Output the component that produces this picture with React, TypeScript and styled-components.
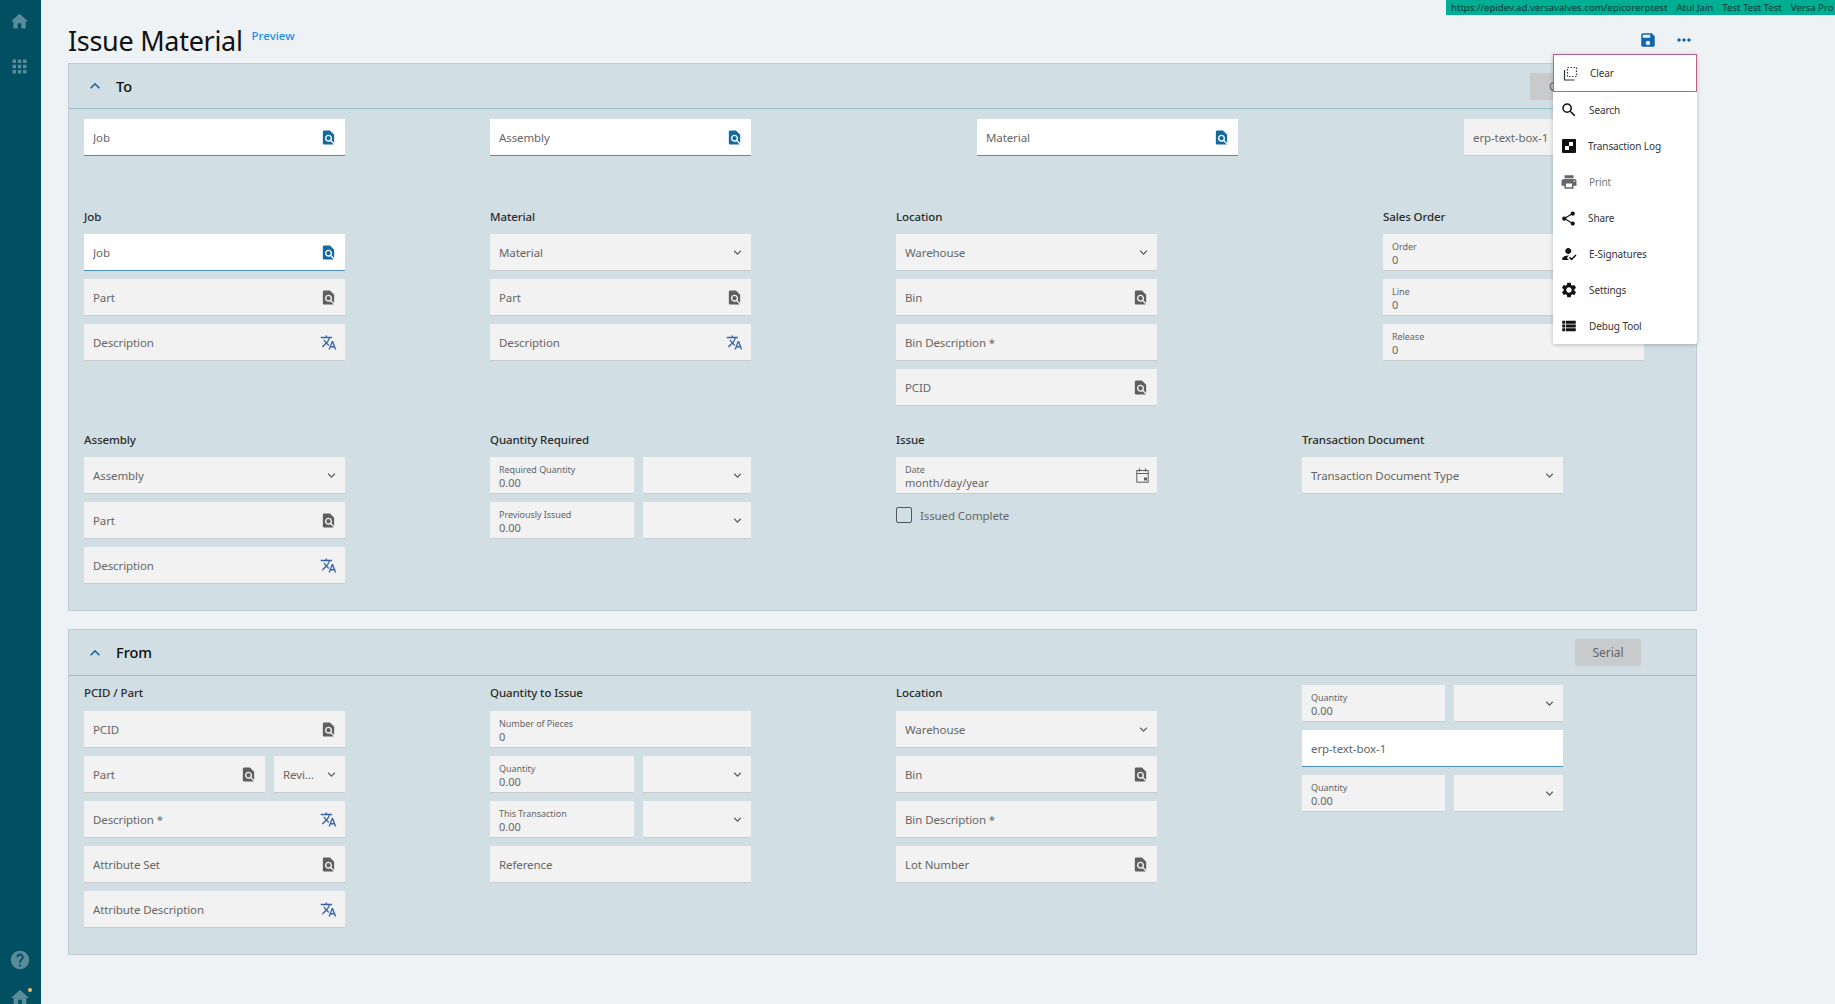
import React from 'react'
import styled, { createGlobalStyle } from 'styled-components'
import {
  MdApps,
  MdExpandLess,
  MdExpandMore,
  MdFindInPage,
  MdHelp,
  MdHome,
  MdHowToReg,
  MdMoreHoriz,
  MdPrint,
  MdSave,
  MdSearch,
  MdSettings,
  MdShare,
  MdTranslate,
  MdViewList,
} from 'react-icons/md'

const GlobalStyle = createGlobalStyle`
  html, body {
    margin: 0;
    height: 100%;
    overflow: hidden;
    background: #eef2f5;
    font-family: "Noto Sans", "Liberation Sans", sans-serif;
  }
`

const Page = styled.div`
  display: flex;
  position: relative;
  width: 1835px;
  height: 1004px;
  overflow: hidden;
`

const Sidebar = styled.nav`
  display: flex;
  flex-direction: column;
  align-items: center;
  flex: 0 0 41px;
  height: 100%;
  padding-top: 11px;
  box-sizing: border-box;
  background: #004f63;
  color: #5a8b99;
`

const SidebarSpacer = styled.div`
  flex: 1;
`

const NavSlot = styled.div<{ $mt?: number }>`
  display: flex;
  margin-top: ${({ $mt }) => $mt ?? 0}px;
  margin-left: -2px;
  line-height: 0;
`

const DropSlot = styled.div`
  position: relative;
  width: 24px;
  height: 17px;
  margin-top: 16px;
  overflow: hidden;
`

const Dot = styled.span`
  position: absolute;
  right: 1px;
  top: 1px;
  width: 4px;
  height: 4px;
  border-radius: 50%;
  background: #f5c65a;
`

const Main = styled.main`
  flex: 1;
  padding: 0 0 0 27px;
`

const TitleRow = styled.header`
  display: flex;
  position: relative;
  align-items: flex-start;
  width: 1629px;
  height: 63px;
`

const Title = styled.h1`
  margin: 21px 0 0;
  color: #111;
  font-size: 27px;
  font-weight: 400;
  line-height: 40px;
  letter-spacing: -0.3px;
`

const PreviewTag = styled.span`
  margin: 28px 0 0 9px;
  color: #1f8fe8;
  font-size: 11.5px;
  font-weight: 500;
  line-height: 16px;
`

const TitleActions = styled.div`
  display: flex;
  align-items: center;
  gap: 17px;
  margin: 30px 3px 0 auto;
  color: #1266a8;
  line-height: 0;
`

const Banner = styled.div`
  position: absolute;
  top: 0;
  left: 1446px;
  display: flex;
  gap: 9px;
  width: 389px;
  height: 15px;
  padding-left: 5px;
  box-sizing: border-box;
  background: #00ae93;
  color: #073a34;
  font-size: 9.6px;
  line-height: 15px;
  white-space: nowrap;
  overflow: hidden;
`

const Panel = styled.section<{ $h: number; $mb?: number }>`
  width: 1629px;
  height: ${({ $h }) => $h}px;
  margin-bottom: ${({ $mb }) => $mb ?? 0}px;
  box-sizing: border-box;
  border: 1px solid #bfcdd3;
  background: #d1dee3;
`

const PanelHeader = styled.div<{ $h: number }>`
  display: flex;
  align-items: center;
  height: ${({ $h }) => $h}px;
  padding: 0 55px 0 16px;
  box-sizing: border-box;
  border-bottom: 1px solid #97c0cc;
`

const Chevron = styled.span`
  display: flex;
  color: #1b6a96;
  line-height: 0;
`

const PanelTitle = styled.h2`
  margin: 0 0 1px 11px;
  color: #0c0c0c;
  font-size: 14.5px;
  font-weight: 500;
`

const HeaderButton = styled.button`
  margin-left: auto;
  width: 111px;
  height: 27px;
  padding: 0 0 0 19px;
  border: 0;
  border-radius: 2px;
  background: #c8cacb;
  color: #666;
  font: inherit;
  font-size: 12px;
  text-align: left;
`

const SerialButton = styled(HeaderButton)`
  width: 66px;
  padding: 0;
  text-align: center;
`

const PanelBody = styled.div<{ $pt: number }>`
  display: flex;
  flex-direction: column;
  padding: ${({ $pt }) => $pt}px 0 0 15px;
`

const Row = styled.div<{ $cols: string; $mt?: number }>`
  display: grid;
  grid-template-columns: ${({ $cols }) => $cols};
  align-items: start;
  margin-top: ${({ $mt }) => $mt ?? 0}px;
`

const Group = styled.div<{ $w?: number }>`
  display: flex;
  flex-direction: column;
  gap: 8px;
  width: ${({ $w }) => $w ?? 261}px;
`

const GroupLabel = styled.div<{ $h?: number }>`
  height: ${({ $h }) => $h ?? 17}px;
  color: #2c2c2c;
  font-size: 11.5px;
  font-weight: 500;
  line-height: 15px;
  letter-spacing: -0.1px;
  white-space: nowrap;
`

const FieldBox = styled.div<{ $active?: boolean }>`
  display: flex;
  align-items: center;
  flex: none;
  width: 100%;
  height: 37px;
  padding: 0 8px 0 9px;
  box-sizing: border-box;
  border-bottom: 1px solid ${({ $active }) => ($active ? '#4a8db5' : '#c8cccf')};
  background: ${({ $active }) => ($active ? '#fff' : '#f2f2f2')};
`

const FieldPlaceholder = styled.span`
  flex: 1;
  min-width: 0;
  padding-top: 1px;
  overflow: hidden;
  color: #666;
  font-size: 11.5px;
  letter-spacing: -0.1px;
  white-space: nowrap;
`

const StackedText = styled.div`
  display: flex;
  flex-direction: column;
  flex: 1;
  min-width: 0;
  padding-top: 2px;
  color: #666;
`

const SmallLabel = styled.span`
  font-size: 9px;
  line-height: 12px;
  letter-spacing: -0.05px;
  white-space: nowrap;
`

const StackedValue = styled.span`
  font-size: 11px;
  line-height: 13px;
  white-space: nowrap;
`

const FieldIcon = styled.span<{ $tone?: string; $nudge?: number }>`
  display: flex;
  flex: none;
  margin-right: ${({ $nudge }) => $nudge ?? 0}px;
  color: ${({ $tone }) => $tone ?? '#5f5f5f'};
  line-height: 0;
`

const Split = styled.div`
  display: flex;
  gap: 9px;
`

const MainSlot = styled.div`
  display: flex;
  flex: 1;
  min-width: 0;
`

const UnitSlot = styled.div<{ $w: number }>`
  display: flex;
  flex: 0 0 ${({ $w }) => $w}px;
`

const CheckRow = styled.label`
  display: flex;
  align-items: center;
  gap: 8px;
  margin-top: 5px;
  color: #666;
  font-size: 11.5px;
  letter-spacing: -0.1px;
`

const CheckBox = styled.span`
  width: 14px;
  height: 14px;
  border: 1px solid #555;
  border-radius: 2px;
`

const Menu = styled.ul`
  position: absolute;
  top: 54px;
  left: 1553px;
  width: 144px;
  height: 290px;
  margin: 0;
  padding: 0;
  border-radius: 2px;
  background: #fff;
  box-shadow: 0 1px 4px rgba(0, 0, 0, 0.22);
  list-style: none;
`

const MenuItem = styled.li<{ $focused?: boolean; $muted?: boolean }>`
  display: flex;
  align-items: center;
  height: ${({ $focused }) => ($focused ? 38 : 36)}px;
  padding-left: ${({ $focused }) => ($focused ? 8 : 7)}px;
  box-sizing: border-box;
  border: ${({ $focused }) => ($focused ? '1px solid #b5628f' : '0')};
  color: ${({ $muted }) => ($muted ? '#777' : '#333')};
  font-size: 10px;
  letter-spacing: -0.1px;
`

const MenuIcon = styled.span<{ $muted?: boolean }>`
  display: flex;
  justify-content: center;
  flex: 0 0 17px;
  margin-right: 11px;
  color: ${({ $muted }) => ($muted ? '#666' : '#111')};
  line-height: 0;
`

const ClearIcon = () => (
  <svg width="15" height="15" viewBox="0 0 15 15" fill="none" stroke="#333" strokeWidth="1.2">
    <path d="M1.5 4v10h10" />
    <path d="M4.5 1.5h9v9h-9z" strokeDasharray="1.5 1.5" />
  </svg>
)

const LogIcon = () => (
  <svg width="14" height="14" viewBox="0 0 14 14">
    <rect width="14" height="14" rx="1" fill="#111" />
    <rect x="7" y="3" width="4" height="4" fill="#fff" />
    <rect x="3" y="7" width="4" height="4" fill="#fff" />
  </svg>
)

const DateIcon = () => (
  <svg width="13" height="15" viewBox="0 0 13 15" fill="none" stroke="#5f5f5f">
    <rect x="0.8" y="2.5" width="11.4" height="11.7" />
    <path d="M0.8 5.5h11.4M3.5 0.5v3M9.5 0.5v3" strokeWidth="1.2" />
    <rect x="8" y="9.5" width="3" height="3" fill="#5f5f5f" stroke="none" />
  </svg>
)

type FieldKind = 'search' | 'translate' | 'select' | 'date' | 'none'

interface FieldProps {
  text?: string
  label?: string
  value?: string
  kind?: FieldKind
  active?: boolean
}

const fieldIcon = (kind: FieldKind, active?: boolean) => {
  if (kind === 'search') {
    return (
      <FieldIcon $tone={active ? '#136a9f' : '#5f5f5f'}>
        <MdFindInPage size={17} />
      </FieldIcon>
    )
  }
  if (kind === 'translate') {
    return (
      <FieldIcon $tone="#3a64a8">
        <MdTranslate size={17} />
      </FieldIcon>
    )
  }
  if (kind === 'select') {
    return (
      <FieldIcon $nudge={-2}>
        <MdExpandMore size={15} />
      </FieldIcon>
    )
  }
  if (kind === 'date') {
    return (
      <FieldIcon>
        <DateIcon />
      </FieldIcon>
    )
  }
  return null
}

const Field = ({ text, label, value, kind = 'none', active }: FieldProps) => (
  <FieldBox $active={active}>
    {label ? (
      <StackedText>
        <SmallLabel>{label}</SmallLabel>
        <StackedValue>{value}</StackedValue>
      </StackedText>
    ) : (
      <FieldPlaceholder>{text}</FieldPlaceholder>
    )}
    {fieldIcon(kind, active)}
  </FieldBox>
)

const QtyField = ({ label, unitWidth = 108 }: { label: string; unitWidth?: number }) => (
  <Split>
    <MainSlot>
      <Field label={label} value="0.00" />
    </MainSlot>
    <UnitSlot $w={unitWidth}>
      <Field kind="select" />
    </UnitSlot>
  </Split>
)

const menuItems = [
  { label: 'Search', icon: <MdSearch size={18} /> },
  { label: 'Transaction Log', icon: <LogIcon /> },
  { label: 'Print', icon: <MdPrint size={18} />, muted: true },
  { label: 'Share', icon: <MdShare size={17} /> },
  { label: 'E-Signatures', icon: <MdHowToReg size={18} /> },
  { label: 'Settings', icon: <MdSettings size={18} /> },
  { label: 'Debug Tool', icon: <MdViewList size={18} /> },
]

export default function App() {
  return (
    <Page>
      <GlobalStyle />
      <Sidebar>
        <NavSlot>
          <MdHome size={21} />
        </NavSlot>
        <NavSlot $mt={24}>
          <MdApps size={21} />
        </NavSlot>
        <SidebarSpacer />
        <NavSlot>
          <MdHelp size={22} />
        </NavSlot>
        <DropSlot>
          <Dot />
          <MdHome size={22} />
        </DropSlot>
      </Sidebar>

      <Main>
        <TitleRow>
          <Title>Issue Material</Title>
          <PreviewTag>Preview</PreviewTag>
          <TitleActions>
            <MdSave size={18} />
            <MdMoreHoriz size={20} />
          </TitleActions>
        </TitleRow>

        <Panel $h={548} $mb={18}>
          <PanelHeader $h={45}>
            <Chevron>
              <MdExpandLess size={20} />
            </Chevron>
            <PanelTitle>To</PanelTitle>
            <HeaderButton>Go</HeaderButton>
          </PanelHeader>
          <PanelBody $pt={10}>
            <Row $cols="406px 487px 487px 176px">
              <Group>
                <Field text="Job" kind="search" active />
              </Group>
              <Group>
                <Field text="Assembly" kind="search" active />
              </Group>
              <Group>
                <Field text="Material" kind="search" active />
              </Group>
              <Group $w={176}>
                <Field text="erp-text-box-1" />
              </Group>
            </Row>
            <Row $cols="406px 406px 487px 261px" $mt={53}>
              <Group>
                <GroupLabel>Job</GroupLabel>
                <Field text="Job" kind="search" active />
                <Field text="Part" kind="search" />
                <Field text="Description" kind="translate" />
              </Group>
              <Group>
                <GroupLabel>Material</GroupLabel>
                <Field text="Material" kind="select" />
                <Field text="Part" kind="search" />
                <Field text="Description" kind="translate" />
              </Group>
              <Group>
                <GroupLabel>Location</GroupLabel>
                <Field text="Warehouse" kind="select" />
                <Field text="Bin" kind="search" />
                <Field text="Bin Description *" />
                <Field text="PCID" kind="search" />
              </Group>
              <Group>
                <GroupLabel>Sales Order</GroupLabel>
                <Field label="Order" value="0" />
                <Field label="Line" value="0" />
                <Field label="Release" value="0" />
              </Group>
            </Row>
            <Row $cols="406px 406px 406px 261px" $mt={26}>
              <Group>
                <GroupLabel>Assembly</GroupLabel>
                <Field text="Assembly" kind="select" />
                <Field text="Part" kind="search" />
                <Field text="Description" kind="translate" />
              </Group>
              <Group>
                <GroupLabel>Quantity Required</GroupLabel>
                <QtyField label="Required Quantity" />
                <QtyField label="Previously Issued" />
              </Group>
              <Group>
                <GroupLabel>Issue</GroupLabel>
                <Field label="Date" value="month/day/year" kind="date" />
                <CheckRow>
                  <CheckBox />
                  Issued Complete
                </CheckRow>
              </Group>
              <Group>
                <GroupLabel>Transaction Document</GroupLabel>
                <Field text="Transaction Document Type" kind="select" />
              </Group>
            </Row>
          </PanelBody>
        </Panel>

        <Panel $h={326}>
          <PanelHeader $h={46}>
            <Chevron>
              <MdExpandLess size={20} />
            </Chevron>
            <PanelTitle>From</PanelTitle>
            <SerialButton>Serial</SerialButton>
          </PanelHeader>
          <PanelBody $pt={9}>
            <Row $cols="406px 406px 406px 261px">
              <Group>
                <GroupLabel $h={18}>PCID / Part</GroupLabel>
                <Field text="PCID" kind="search" />
                <Split>
                  <MainSlot>
                    <Field text="Part" kind="search" />
                  </MainSlot>
                  <UnitSlot $w={71}>
                    <Field text="Revi..." kind="select" />
                  </UnitSlot>
                </Split>
                <Field text="Description *" kind="translate" />
                <Field text="Attribute Set" kind="search" />
                <Field text="Attribute Description" kind="translate" />
              </Group>
              <Group>
                <GroupLabel $h={18}>Quantity to Issue</GroupLabel>
                <Field label="Number of Pieces" value="0" />
                <QtyField label="Quantity" />
                <QtyField label="This Transaction" />
                <Field text="Reference" />
              </Group>
              <Group>
                <GroupLabel $h={18}>Location</GroupLabel>
                <Field text="Warehouse" kind="select" />
                <Field text="Bin" kind="search" />
                <Field text="Bin Description *" />
                <Field text="Lot Number" kind="search" />
              </Group>
              <Group>
                <QtyField label="Quantity" unitWidth={109} />
                <Field text="erp-text-box-1" active />
                <QtyField label="Quantity" unitWidth={109} />
              </Group>
            </Row>
          </PanelBody>
        </Panel>
      </Main>

      <Banner>
        <span>https://epidev.ad.versavalves.com/epicorerptest</span>
        <span>Atul Jain</span>
        <span>Test Test Test</span>
        <span>Versa Pro</span>
      </Banner>

      <Menu>
        <MenuItem $focused>
          <MenuIcon>
            <ClearIcon />
          </MenuIcon>
          Clear
        </MenuItem>
        {menuItems.map(({ label, icon, muted }) => (
          <MenuItem key={label} $muted={muted}>
            <MenuIcon $muted={muted}>{icon}</MenuIcon>
            {label}
          </MenuItem>
        ))}
      </Menu>
    </Page>
  )
}
